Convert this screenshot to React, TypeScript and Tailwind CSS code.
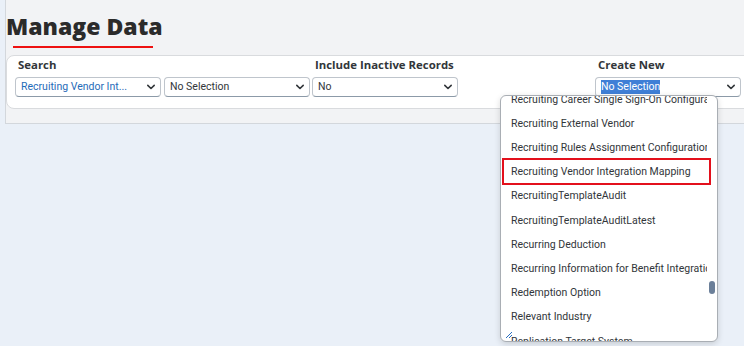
const options = [
  "Recruiting Career Single Sign-On Configuration",
  "Recruiting External Vendor",
  "Recruiting Rules Assignment Configuration",
  "Recruiting Vendor Integration Mapping",
  "RecruitingTemplateAudit",
  "RecruitingTemplateAuditLatest",
  "Recurring Deduction",
  "Recurring Information for Benefit Integration",
  "Redemption Option",
  "Relevant Industry",
  "Replication Target System",
];

function Chevron() {
  return (
    <svg width="10" height="10" viewBox="0 0 10 10" className="shrink-0">
      <path d="M1.8 3.4 L5 6.5 L8.2 3.4" fill="none" stroke="#32363a" strokeWidth="1.6" strokeLinecap="round" strokeLinejoin="round" />
    </svg>
  );
}

function Select({ value, blue, selected }: { value: string; blue?: boolean; selected?: boolean }) {
  return (
    <div className="flex h-[20px] w-[146px] items-center justify-between rounded-[4px] border border-[#bfc5cc] border-b-[#8c9aa8] bg-white pl-[5px] pr-[4px]">
      {selected ? (
        <span className="bg-[#3f7fd6] leading-[14px] text-white">{value}</span>
      ) : (
        <span className={blue ? "text-[#1f6bb8]" : "text-[#32363a]"}>{value}</span>
      )}
      <Chevron />
    </div>
  );
}

function Label({ children }: { children: string }) {
  return (
    <div className="h-[15px] pl-[3px] font-['Open_Sans',sans-serif] text-[11.4px] font-bold leading-[15px] text-[#32363a]">
      {children}
    </div>
  );
}

export default function App() {
  return (
    <div className="relative h-[346px] w-[744px] overflow-hidden bg-[#eaf0f8] font-['Roboto',sans-serif] text-[10.5px]">
      <div className="ml-[5px] h-[124px] overflow-hidden border-b border-l border-[#d3d7dc] bg-[#f2f3f5]">
        <h1 className="pt-[12px] font-['Open_Sans',sans-serif] text-[23px] font-extrabold leading-[28px] text-[#2b2b2b]">
          Manage Data
        </h1>
        <div className="ml-[7px] mt-[6px] h-[2px] w-[140px] bg-[#ee1111]" />
        <div className="-mr-4 mt-[7px] h-[54px] rounded-lg border border-[#d9dbde] bg-white pl-[8px] pt-[1px]">
          <div className="flex">
            <div className="flex w-[297px] flex-col">
              <Label>Search</Label>
              <div className="mt-[5px] flex gap-[3px]">
                <Select value="Recruiting Vendor Int..." blue />
                <Select value="No Selection" />
              </div>
            </div>
            <div className="flex w-[283px] flex-col">
              <Label>Include Inactive Records</Label>
              <div className="mt-[5px]">
                <Select value="No" />
              </div>
            </div>
            <div className="flex flex-col">
              <Label>Create New</Label>
              <div className="mt-[5px]">
                <Select value="No Selection" selected />
              </div>
            </div>
          </div>
        </div>
      </div>

      <div className="absolute left-[500px] top-[95px] h-[247px] w-[218px] overflow-hidden rounded-md border border-[#a9aeb4] bg-white shadow-[0_2px_6px_rgba(0,0,0,0.15)]">
        <div className="mt-[-8.5px] w-[206px] overflow-hidden">
          {options.map((o) => (
            <div key={o} className="flex h-[24.2px] items-center whitespace-nowrap pl-[10px] text-[#32363a]">
              {o}
            </div>
          ))}
        </div>
        <div className="absolute left-[1px] top-[62px] h-[27px] w-[209px] border-2 border-[#e3101c]" />
        <div className="absolute left-[208px] top-[185px] h-[13px] w-[6px] rounded-full bg-[#6b7f99]" />
        <svg width="8" height="8" viewBox="0 0 8 8" className="absolute bottom-[2px] left-[4px]">
          <path d="M1 7 L7 1 M4 7 L7 4" stroke="#2a6fc0" strokeWidth="1" />
        </svg>
      </div>
    </div>
  );
}
